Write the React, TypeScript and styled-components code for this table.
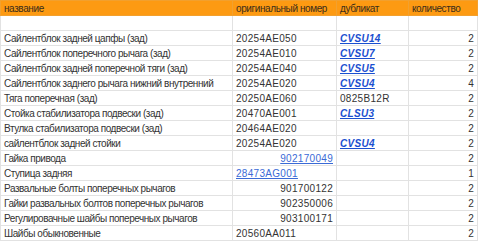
import React from "react"
import styled, { createGlobalStyle } from "styled-components"

const GlobalStyle = createGlobalStyle`
  html, body {
    margin: 0;
    padding: 0;
    background: #ffffff;
  }
  body {
    font-family: "Liberation Sans", Arial, sans-serif;
  }
`

type Link = { text: string; strong?: boolean }

type Row = {
  name: string
  original?: string | Link
  originalRight?: boolean
  duplicate?: string | Link
  count?: number
}

const rows: Array<Row> = [
  { name: "" },
  { name: "Сайлентблок задней цапфы (зад)", original: "20254AE050", duplicate: { text: "CVSU14", strong: true }, count: 2 },
  { name: "Сайлентблок поперечного рычага (зад)", original: "20254AE010", duplicate: { text: "CVSU7", strong: true }, count: 2 },
  { name: "Сайлентблок задней поперечной тяги (зад)", original: "20254AE040", duplicate: { text: "CVSU5", strong: true }, count: 2 },
  { name: "Сайлентблок заднего рычага нижний внутренний", original: "20254AE020", duplicate: { text: "CVSU4", strong: true }, count: 4 },
  { name: "Тяга поперечная (зад)", original: "20250AE060", duplicate: "0825B12R", count: 2 },
  { name: "Стойка стабилизатора подвески (зад)", original: "20470AE001", duplicate: { text: "CLSU3", strong: true }, count: 2 },
  { name: "Втулка стабилизатора подвески (зад)", original: "20464AE020", count: 2 },
  { name: "сайлентблок задней стойки", original: "20254AE020", duplicate: { text: "CVSU4", strong: true }, count: 2 },
  { name: "Гайка привода", original: { text: "902170049" }, originalRight: true, count: 2 },
  { name: "Ступица задняя", original: { text: "28473AG001" }, count: 1 },
  { name: "Развальные болты поперечных рычагов", original: "901700122", originalRight: true, count: 2 },
  { name: "Гайки развальных болтов поперечных рычагов", original: "902350006", originalRight: true, count: 2 },
  { name: "Регулировачные шайбы поперечных рычагов", original: "903100171", originalRight: true, count: 2 },
  { name: "Шайбы обыкновенные", original: "20560AA011", count: 2 },
]

const Sheet = styled.table`
  border-collapse: collapse;
  table-layout: fixed;
  width: 477px;
  font-size: 10px;
  color: #333333;
`

const HeadCell = styled.th<{ $width: number }>`
  width: ${({ $width }) => $width}px;
  height: 15px;
  padding: 0 3px;
  box-sizing: border-box;
  background: #fd9a12;
  border: 1px solid #f2a02e;
  font-weight: normal;
  text-align: left;
  color: #3b2d1a;
  letter-spacing: -0.4px;
  white-space: nowrap;
  overflow: hidden;
`

const Cell = styled.td<{ $right?: boolean; $text?: boolean }>`
  height: 14px;
  padding: 0 ${({ $right }) => ($right ? "3px" : "2px")} 0 3px;
  border: 1px solid #e2e2e2;
  text-align: ${({ $right }) => ($right ? "right" : "left")};
  letter-spacing: ${({ $text }) => ($text ? "-0.45px" : "0.3px")};
  white-space: nowrap;
  overflow: hidden;
  line-height: 13px;
`

const SheetLink = styled.a<{ $strong?: boolean }>`
  color: ${({ $strong }) => ($strong ? "#1a4fd0" : "#3a6ad6")};
  font-weight: ${({ $strong }) => ($strong ? "bold" : "normal")};
  font-style: ${({ $strong }) => ($strong ? "italic" : "normal")};
  text-decoration: underline;
`

const renderValue = (value?: string | Link) => {
  if (!value) return null
  if (typeof value === "string") return value
  return <SheetLink $strong={value.strong}>{value.text}</SheetLink>
}

export default function App() {
  return (
    <>
      <GlobalStyle />
      <Sheet>
        <thead>
          <tr>
            <HeadCell $width={232}>название</HeadCell>
            <HeadCell $width={104}>оригинальный номер</HeadCell>
            <HeadCell $width={72}>дубликат</HeadCell>
            <HeadCell $width={69}>количество</HeadCell>
          </tr>
        </thead>
        <tbody>
          {rows.map((row, i) => (
            <tr key={i}>
              <Cell $text>{row.name}</Cell>
              <Cell $right={row.originalRight}>{renderValue(row.original)}</Cell>
              <Cell>{renderValue(row.duplicate)}</Cell>
              <Cell $right>{row.count ?? ""}</Cell>
            </tr>
          ))}
        </tbody>
      </Sheet>
    </>
  )
}
